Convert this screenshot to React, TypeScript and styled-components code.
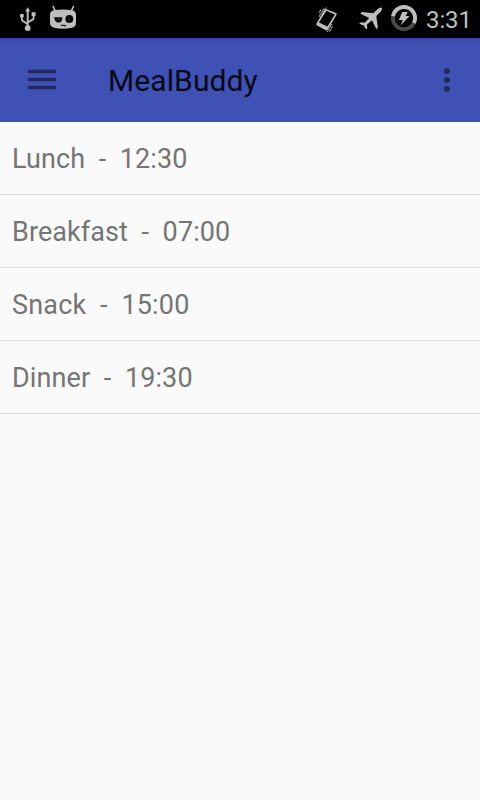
import React from "react";
import styled, { createGlobalStyle } from "styled-components";

const GlobalStyle = createGlobalStyle`
  body {
    margin: 0;
    background: #fafafa;
    font-family: Roboto, sans-serif;
    overflow: hidden;
  }
`;

const Screen = styled.div`
  width: 480px;
  height: 800px;
  display: flex;
  flex-direction: column;
  background: #fafafa;
`;

const StatusBar = styled.header`
  display: flex;
  justify-content: space-between;
  height: 38px;
  flex: none;
  background: #000;
`;

const StatusGroup = styled.div<{ $left?: number; $right?: number }>`
  display: flex;
  padding-left: ${(p) => p.$left ?? 0}px;
  padding-right: ${(p) => p.$right ?? 0}px;
`;

const StatusIcon = styled.svg`
  display: block;
  height: 38px;
  flex: none;
`;

const Clock = styled.span`
  width: 45px;
  margin-left: 8px;
  font-size: 24px;
  line-height: 40px;
  letter-spacing: -0.1px;
  color: #bebebe;
  white-space: nowrap;
`;

const Toolbar = styled.nav`
  display: flex;
  align-items: center;
  height: 84px;
  flex: none;
  box-sizing: border-box;
  padding: 0 29px 0 28px;
  background: linear-gradient(#36459b 0, #3c4dab 2px, #3f51b5 8px);
`;

const IconButton = styled.button`
  display: block;
  padding: 0;
  border: 0;
  background: none;
  line-height: 0;
`;

const Title = styled.h1`
  flex: 1;
  margin: 0 0 0 52px;
  padding-top: 2px;
  font-size: 30px;
  font-weight: 400;
  line-height: 82px;
  letter-spacing: 0.1px;
  color: #080a17;
`;

const MealList = styled.ul`
  margin: 0;
  padding: 0;
  list-style: none;
`;

const MealRow = styled.li<{ $spacing: number }>`
  height: 72px;
  padding-left: 12px;
  border-bottom: 1px solid #dcdcdc;
  font-size: 27px;
  line-height: 75px;
  letter-spacing: ${(p) => p.$spacing}px;
  color: #757575;
  white-space: pre;
`;

const meals = [
  { name: "Lunch", time: "12:30", spacing: 0.08 },
  { name: "Breakfast", time: "07:00", spacing: 0.08 },
  { name: "Snack", time: "15:00", spacing: 0.17 },
  { name: "Dinner", time: "19:30", spacing: 0.1 },
];

const UsbIcon = () => (
  <StatusIcon width="18" viewBox="19 0 18 38" fill="none" stroke="#bebebe" strokeWidth="1.9">
    <path d="M27.7 10V27M21.8 16v3.2q0 1.2 1.2 1.8l4.7 3.2M33.6 15v3q0 1.1-1.1 1.6l-4.8 2.9" />
    <path d="M27.7 7.2 30.2 11.4H25.2Z" fill="#bebebe" stroke="none" />
    <circle cx="21.9" cy="15.8" r="2.1" fill="#bebebe" stroke="none" />
    <rect x="31.6" y="12.2" width="4" height="3.8" fill="#bebebe" stroke="none" />
    <circle cx="27.7" cy="28.1" r="2.9" fill="#bebebe" stroke="none" />
  </StatusIcon>
);

const RobotIcon = () => (
  <StatusIcon width="32" viewBox="46 0 32 38">
    <path d="M53.2 6.6 55.2 11M73.4 6.6 71.2 11" stroke="#bebebe" strokeWidth="1.6" strokeLinecap="round" />
    <path
      d="M50 14.5Q50.2 11.2 54 10.3Q63 8.8 72.2 10.3Q75.8 11.2 76 14.5V23Q75.9 26.6 72.2 27.8Q63 29.8 54 27.8Q50.2 26.6 50 23Z"
      fill="#bebebe"
    />
    <path d="M54.2 17.3H62.4Q62.2 22.6 58.5 22.6T54.2 17.3Z" fill="#050505" />
    <circle cx="69.3" cy="18.9" r="3.9" fill="#050505" />
    <circle cx="58.4" cy="19.3" r="0.7" fill="#555" />
    <circle cx="69.4" cy="18.9" r="0.6" fill="#444" />
    <path d="M60.8 25 65.2 25.8 66 24.9" stroke="#111" strokeWidth="1.1" fill="none" />
  </StatusIcon>
);

const VibrateIcon = () => (
  <StatusIcon width="28" viewBox="313 0 28 38">
    <path
      d="M325.9 8.9 335.9 12.9Q337.1 13.5 336.6 14.7L327.6 29.8Q326.9 30.8 325.9 30.3L317 25.5Q315.9 24.8 316.5 23.6L324.5 9.5Q325 8.5 325.9 8.9Z"
      fill="#bebebe"
    />
    <path d="M326.4 10.7 334.9 14.4 327.5 26.6 318.9 22.4Z" fill="#000" />
    <path
      d="M318.9 16.8 324 8.1M320.9 17 326.3 7.6M319 12.8 321 9.4M327.3 31.8 332 23.9M329.5 31.6 332.6 26.4"
      stroke="#b0b0b0"
      strokeWidth="1.1"
      strokeDasharray="1.5 .4"
    />
  </StatusIcon>
);

const AirplaneIcon = () => (
  <StatusIcon width="28" viewBox="357 0 28 38">
    <path
      d="M382 8Q382.8 9 380.8 11.4L376.3 16 377.9 27.6 376.3 29.1 371.9 20.2 366.9 24.7 367.3 28.3 366.1 29.4 363.8 25.6 359.2 23.7 360.3 22.4 365 22.4 369.2 17.9 360.4 13.7 361.9 12 373.2 13.2 378.3 8.6Q381 6.8 382 8Z"
      fill="#bebebe"
    />
  </StatusIcon>
);

const BatteryIcon = () => (
  <StatusIcon width="28" viewBox="390 0 28 38" fill="none">
    <circle cx="404" cy="18" r="11.1" stroke="#4b4b4b" strokeWidth="3.8" />
    <path d="M393 16.2A11.1 11.1 0 1 1 413.9 23" stroke="#bebebe" strokeWidth="3.8" />
    <path d="M402.3 12.1H407.8L405.7 16H409.6L400.8 25.3 402.7 19.9H398.8Z" fill="#bebebe" />
  </StatusIcon>
);

const MenuIcon = () => (
  <svg width="28" height="24" viewBox="0 0 28 24" fill="#202a5e">
    <rect y="1.8" width="28" height="3.4" />
    <rect y="9.8" width="28" height="3.4" />
    <rect y="17.8" width="28" height="3.4" />
  </svg>
);

const MoreIcon = () => (
  <svg width="8" height="26" viewBox="0 0 8 26" fill="#202a5e">
    <circle cx="4" cy="4" r="3" />
    <circle cx="4" cy="13" r="3" />
    <circle cx="4" cy="22" r="3" />
  </svg>
);

export default function App() {
  return (
    <Screen>
      <GlobalStyle />
      <StatusBar>
        <StatusGroup $left={19}>
          <UsbIcon />
          <StatusGroup $left={9}>
            <RobotIcon />
          </StatusGroup>
        </StatusGroup>
        <StatusGroup $right={9}>
          <VibrateIcon />
          <StatusGroup $left={16}>
            <AirplaneIcon />
          </StatusGroup>
          <StatusGroup $left={5}>
            <BatteryIcon />
          </StatusGroup>
          <Clock>3:31</Clock>
        </StatusGroup>
      </StatusBar>
      <Toolbar>
        <IconButton aria-label="Open menu">
          <MenuIcon />
        </IconButton>
        <Title>MealBuddy</Title>
        <IconButton aria-label="More options">
          <MoreIcon />
        </IconButton>
      </Toolbar>
      <MealList>
        {meals.map((meal) => (
          <MealRow key={meal.name} $spacing={meal.spacing}>
            {`${meal.name}  -  ${meal.time}`}
          </MealRow>
        ))}
      </MealList>
    </Screen>
  );
}
